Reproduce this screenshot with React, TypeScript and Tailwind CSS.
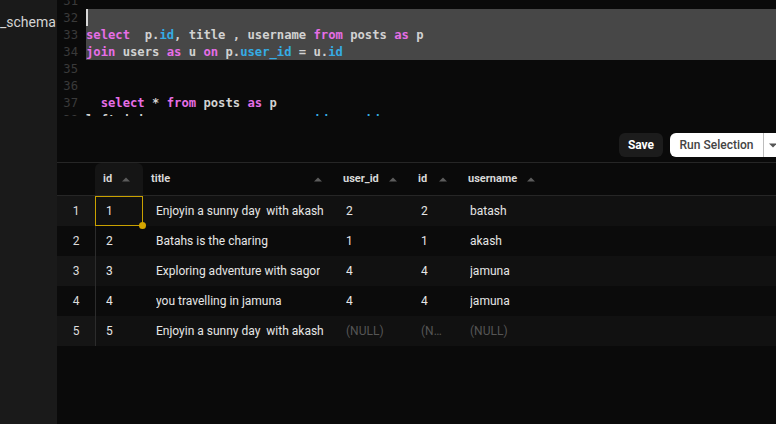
import React from "react";

type Tok = [string, "k" | "b" | "t"];

const codeLines: { n: number; toks: Tok[]; sel?: boolean; cursor?: boolean }[] = [
  { n: 31, toks: [] },
  { n: 32, toks: [], sel: true, cursor: true },
  {
    n: 33,
    sel: true,
    toks: [
      ["select", "k"],
      ["  p.", "t"],
      ["id", "b"],
      [", title , username ", "t"],
      ["from", "k"],
      [" posts ", "t"],
      ["as", "k"],
      [" p", "t"],
    ],
  },
  {
    n: 34,
    sel: true,
    toks: [
      ["join", "k"],
      [" users ", "t"],
      ["as", "k"],
      [" u ", "t"],
      ["on", "k"],
      [" p.", "t"],
      ["user_id", "b"],
      [" = u.", "t"],
      ["id", "b"],
    ],
  },
  { n: 35, toks: [] },
  { n: 36, toks: [] },
  {
    n: 37,
    toks: [
      ["  ", "t"],
      ["select", "k"],
      [" * ", "t"],
      ["from", "k"],
      [" posts ", "t"],
      ["as", "k"],
      [" p", "t"],
    ],
  },
  {
    n: 38,
    toks: [
      ["left join users as u on p.", "t"],
      ["user_id", "b"],
      [" = u.", "t"],
      ["id", "b"],
    ],
  },
];

const tokColor = {
  k: "text-[#e66ee6]",
  b: "text-[#35ace4]",
  t: "text-[#d2d2d2]",
};

const rows = [
  ["1", "Enjoyin a sunny day  with akash", "2", "2", "batash"],
  ["2", "Batahs is the charing", "1", "1", "akash"],
  ["3", "Exploring adventure with sagor", "4", "4", "jamuna"],
  ["4", "you travelling in jamuna", "4", "4", "jamuna"],
  ["5", "Enjoyin a sunny day  with akash", null, null, null],
];

const cols = [
  { label: "id", w: "w-[48px]", bw: "w-[47px]", pad: "pl-[10px] pr-[13px]" },
  { label: "title", w: "w-[192px]", bw: "w-[192px]", pad: "pl-[13px] pr-[4px]" },
  { label: "user_id", w: "w-[75px]", bw: "w-[75px]", pad: "pl-[11px] pr-[13px]" },
  { label: "id", w: "w-[50px]", bw: "w-[50px]", pad: "pl-[11px] pr-[13px]" },
  { label: "username", w: "w-[88px]", bw: "w-[88px]", pad: "pl-[10px] pr-[13px]" },
];

const SortArrow = () => (
  <svg width="8" height="5" viewBox="0 0 8 5" className="shrink-0">
    <path d="M0 4.5 L4 0.5 L8 4.5 Z" fill="#5c5c5c" />
  </svg>
);

export default function App() {
  return (
    <div
      className="w-[776px] h-[424px] flex overflow-hidden bg-[#0a0a0a]"
      style={{ fontFamily: "Roboto, 'Liberation Sans', sans-serif" }}
    >
      <div className="w-[57px] shrink-0 bg-[#1a1a1a] overflow-hidden">
        <div className="pt-[13px] text-[14px] leading-[18px] text-[#d4d4d4] whitespace-nowrap">
          _schema
        </div>
      </div>

      <div className="flex-1 flex flex-col min-w-0 overflow-hidden">
        {/* editor */}
        <div
          className="h-[116px] overflow-hidden text-[12.2px] font-bold"
          style={{ fontFamily: "'DejaVu Sans Mono', 'Liberation Mono', monospace" }}
        >
          <div className="mt-[-8px]">
            {codeLines.map((l) => (
              <div key={l.n} className="flex h-[17px] leading-[19px] overflow-hidden">
                <div className="w-[29px] shrink-0 pr-[8px] text-right text-[#3a3a3a] font-normal">
                  {l.n}
                </div>
                <div
                  className={`flex-1 relative whitespace-pre ${l.sel ? "bg-[#474747]" : ""}`}
                >
                  {l.cursor && (
                    <div className="absolute left-0 top-0 w-[2px] h-[17px] bg-[#d8d8d8]" />
                  )}
                  {l.toks.map((t, i) => (
                    <span key={i} className={tokColor[t[1]]}>
                      {t[0]}
                    </span>
                  ))}
                </div>
              </div>
            ))}
          </div>
        </div>

        {/* toolbar */}
        <div className="h-[46px] flex justify-end items-start pt-[17px] gap-[7px] mr-[-8px]">
          <button className="h-[24px] w-[44px] rounded-md bg-[#1c1c1c] text-white text-[12px] font-bold">
            Save
          </button>
          <div className="h-[24px] flex bg-white rounded-md">
            <div className="w-[93px] flex items-center justify-center text-[12px] font-medium text-[#444]">
              Run Selection
            </div>
            <div className="w-px bg-[#bdbdbd]" />
            <div className="w-[20px] flex items-center pl-[5px]">
              <svg width="8" height="5" viewBox="0 0 8 5">
                <path d="M0 0.5 L8 0.5 L4 4.5 Z" fill="#555" />
              </svg>
            </div>
          </div>
        </div>

        {/* table */}
        <div className="border-t border-[#262626]">
          <div className="flex h-[33px] border-b border-[#262626]">
            <div className="w-[38px] shrink-0" />
            {cols.map((c, i) => (
              <div
                key={i}
                className={`${c.w} shrink-0 flex items-center justify-between pl-[8px] pr-[13px] text-[11px] font-bold text-[#d8d8d8] ${
                  i === 0 ? "bg-[#151515] rounded-t-md" : ""
                }`}
              >
                <span>{c.label}</span>
                <SortArrow />
              </div>
            ))}
          </div>

          {rows.map((r, ri) => {
            const odd = ri % 2 === 0;
            return (
              <div
                key={ri}
                className={`flex h-[30px] text-[12px] ${odd ? "bg-[#111111]" : "bg-[#0b0b0b]"}`}
              >
                <div
                  className={`w-[39px] shrink-0 flex items-center justify-center text-[#dcdcdc] border-r border-[#2c2c2c] ${
                    odd ? "bg-[#151515]" : "bg-[#0b0b0b]"
                  }`}
                >
                  {ri + 1}
                </div>
                {r.map((v, ci) => {
                  const selected = ri === 0 && ci === 0;
                  return (
                    <div
                      key={ci}
                      className={`${
                        selected
                          ? "w-[48px] ml-[-1px] border border-[#c9a100] pl-[10px] pr-[13px]"
                          : `${cols[ci].bw} ${cols[ci].pad}`
                      } shrink-0 relative flex items-center`}
                    >
                      <span
                        className={`truncate whitespace-pre ${
                          v === null ? "text-[#555555]" : "text-[#e6e6e6]"
                        }`}
                      >
                        {v === null ? "(NULL)" : v}
                      </span>
                      {selected && (
                        <div className="absolute right-[-4px] bottom-[-4px] w-[7px] h-[7px] rounded-full bg-[#d4a500]" />
                      )}
                    </div>
                  );
                })}
                <div className="flex-1" />
              </div>
            );
          })}
        </div>
      </div>
    </div>
  );
}
